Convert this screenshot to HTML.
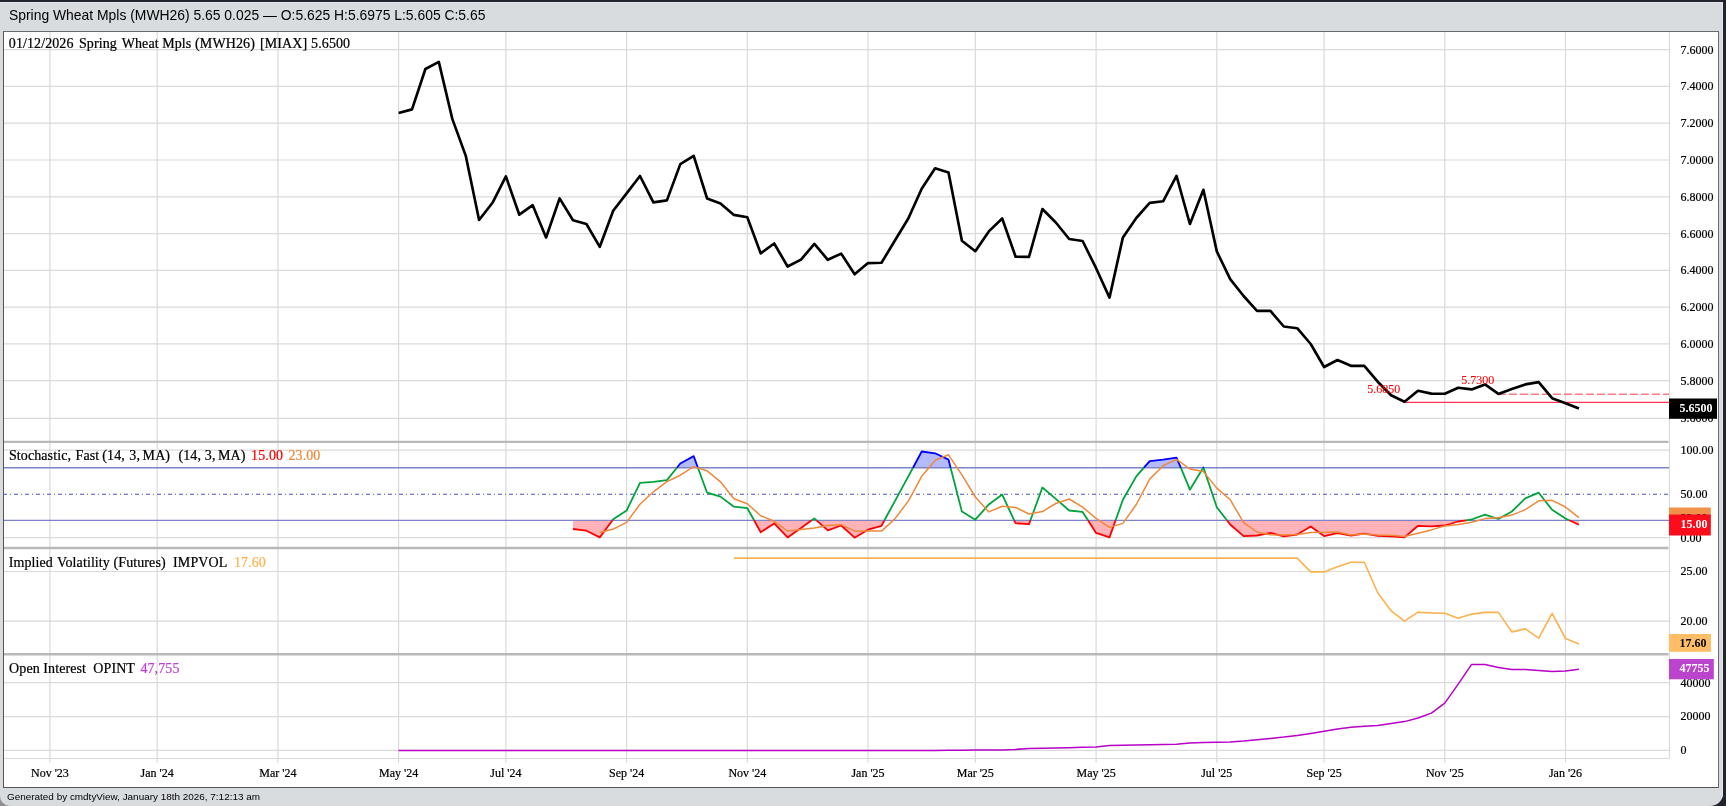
<!DOCTYPE html>
<html lang="en">
<head>
<meta charset="utf-8">
<title>Spring Wheat Mpls (MWH26)</title>
<style>
html,body{margin:0;padding:0;}
body{width:1726px;height:806px;overflow:hidden;background:#22232d;position:relative;font-family:"Liberation Sans",sans-serif;}
#win{position:absolute;left:0;top:2px;width:1723px;height:804px;background:#d9dcdf;border-radius:0 0 13px 10px;overflow:hidden;box-shadow:inset -1px 1px 0 #e6e9ec;}
#hdr{position:absolute;left:9px;top:5px;font-size:13.9px;line-height:16px;color:#000;white-space:pre;}
#chart{position:absolute;left:3px;top:29px;width:1714px;height:755px;background:#fff;border:1px solid #6a6a6a;border-left-color:#555;border-bottom-color:#555;}
#ftr{position:absolute;top:789px;left:7px;font-size:9.93px;line-height:12px;color:#000;white-space:pre;}
svg{position:absolute;left:0;top:0;will-change:transform;}
#hdr,#ftr{will-change:transform;}
</style>
</head>
<body>
<div style="position:absolute;left:0;top:790px;width:14px;height:16px;background:#8e8e90"></div>
<div id="win">
<div id="hdr">Spring Wheat Mpls (MWH26) 5.65 0.025 — O:5.625 H:5.6975 L:5.605 C:5.65</div>
<div id="chart"></div>
<div id="ftr">Generated by cmdtyView, January 18th 2026, 7:12:13 am</div>
</div>
<svg width="1726" height="806" viewBox="0 0 1726 806">
<g stroke="#dadada" stroke-width="1.2" fill="none">
<line x1="49.9" y1="32" x2="49.9" y2="762.5"/>
<line x1="157.2" y1="32" x2="157.2" y2="762.5"/>
<line x1="277.9" y1="32" x2="277.9" y2="762.5"/>
<line x1="398.6" y1="32" x2="398.6" y2="762.5"/>
<line x1="505.9" y1="32" x2="505.9" y2="762.5"/>
<line x1="626.6" y1="32" x2="626.6" y2="762.5"/>
<line x1="747.3" y1="32" x2="747.3" y2="762.5"/>
<line x1="868.0" y1="32" x2="868.0" y2="762.5"/>
<line x1="975.3" y1="32" x2="975.3" y2="762.5"/>
<line x1="1096.1" y1="32" x2="1096.1" y2="762.5"/>
<line x1="1216.8" y1="32" x2="1216.8" y2="762.5"/>
<line x1="1324.1" y1="32" x2="1324.1" y2="762.5"/>
<line x1="1444.8" y1="32" x2="1444.8" y2="762.5"/>
<line x1="1565.5" y1="32" x2="1565.5" y2="762.5"/>
<line x1="4" y1="49.6" x2="1669" y2="49.6"/>
<line x1="4" y1="86.4" x2="1669" y2="86.4"/>
<line x1="4" y1="123.2" x2="1669" y2="123.2"/>
<line x1="4" y1="160.0" x2="1669" y2="160.0"/>
<line x1="4" y1="196.8" x2="1669" y2="196.8"/>
<line x1="4" y1="233.6" x2="1669" y2="233.6"/>
<line x1="4" y1="270.3" x2="1669" y2="270.3"/>
<line x1="4" y1="307.1" x2="1669" y2="307.1"/>
<line x1="4" y1="343.9" x2="1669" y2="343.9"/>
<line x1="4" y1="380.7" x2="1669" y2="380.7"/>
<line x1="4" y1="418.3" x2="1669" y2="418.3"/>
<line x1="4" y1="450.2" x2="1669" y2="450.2"/>
<line x1="4" y1="537.7" x2="1669" y2="537.7"/>
<line x1="4" y1="571.5" x2="1669" y2="571.5"/>
<line x1="4" y1="621.1" x2="1669" y2="621.1"/>
<line x1="4" y1="682.7" x2="1669" y2="682.7"/>
<line x1="4" y1="716.6" x2="1669" y2="716.6"/>
<line x1="4" y1="750.4" x2="1669" y2="750.4"/>
<line x1="4" y1="758.5" x2="1669" y2="758.5"/>
<line x1="1669.5" y1="32" x2="1669.5" y2="758.5"/>
</g>
<path d="M573.0,520.3 L573.0,529.0 L586.4,530.7 L599.8,537.4 L612.5,520.3 L612.5,520.3 Z" fill="#ffb3b8" stroke="none"/>
<path d="M754.1,520.3 L754.1,520.3 L760.7,532.2 L774.2,523.4 L787.6,537.4 L801.0,528.0 L811.7,520.3 L811.7,520.3 Z" fill="#ffb3b8" stroke="none"/>
<path d="M816.5,520.3 L816.5,520.3 L827.8,530.3 L841.2,525.5 L854.6,537.7 L868.0,529.7 L881.5,525.8 L884.4,520.3 L884.4,520.3 Z" fill="#ffb3b8" stroke="none"/>
<path d="M1014.2,520.3 L1014.2,520.3 L1015.6,523.2 L1029.0,524.1 L1030.4,520.3 L1030.4,520.3 Z" fill="#ffb3b8" stroke="none"/>
<path d="M1088.0,520.3 L1088.0,520.3 L1096.1,532.9 L1109.5,537.4 L1115.6,520.3 L1115.6,520.3 Z" fill="#ffb3b8" stroke="none"/>
<path d="M1226.9,520.3 L1226.9,520.3 L1230.2,524.5 L1243.6,536.1 L1257.0,535.5 L1270.4,532.9 L1283.8,536.4 L1297.2,534.5 L1310.7,526.4 L1324.1,536.1 L1337.5,533.2 L1350.9,535.5 L1364.3,533.6 L1377.7,535.8 L1391.1,536.4 L1404.5,537.4 L1418.0,525.8 L1431.4,526.4 L1444.8,525.5 L1458.2,521.5 L1466.2,520.3 L1466.2,520.3 Z" fill="#ffb3b8" stroke="none"/>
<path d="M1569.2,520.3 L1569.2,520.3 L1578.9,524.7 L1578.9,520.3 Z" fill="#ffb3b8" stroke="none"/>
<path d="M676.9,467.7 L676.9,467.7 L680.3,463.5 L693.7,456.1 L697.9,467.7 L697.9,467.7 Z" fill="#b3bbfa" stroke="none"/>
<path d="M913.0,467.7 L913.0,467.7 L921.7,451.5 L935.1,453.3 L948.5,459.6 L950.6,467.7 L950.6,467.7 Z" fill="#b3bbfa" stroke="none"/>
<path d="M1143.9,467.7 L1143.9,467.7 L1149.7,461.1 L1163.1,459.6 L1176.5,457.6 L1180.8,467.7 L1180.8,467.7 Z" fill="#b3bbfa" stroke="none"/>
<path d="M1203.2,467.7 L1203.2,467.7 L1203.4,467.4 L1203.5,467.7 L1203.5,467.7 Z" fill="#b3bbfa" stroke="none"/>
<g stroke="#7d84c9" stroke-width="1.35" fill="none">
<line x1="4" y1="467.7" x2="1669" y2="467.7"/>
<line x1="4" y1="520.3" x2="1669" y2="520.3"/>
<line x1="3" y1="494.3" x2="1669" y2="494.3" stroke="#4652bd" stroke-width="1.1" stroke-dasharray="4 3 1 3"/>
</g>
<path d="M612.5,520.3 L613.2,519.3 L626.6,510.6 L640.0,482.9 L653.4,481.9 L666.9,480.1 L676.9,467.7" fill="none" stroke="#00a33c" stroke-width="1.8" stroke-linejoin="round"/>
<path d="M697.9,467.7 L707.1,492.7 L720.5,496.6 L733.9,506.7 L747.3,508.2 L754.1,520.3" fill="none" stroke="#00a33c" stroke-width="1.8" stroke-linejoin="round"/>
<path d="M811.7,520.3 L814.4,518.4 L816.5,520.3" fill="none" stroke="#00a33c" stroke-width="1.8" stroke-linejoin="round"/>
<path d="M884.4,520.3 L894.9,501.1 L908.3,476.4 L913.0,467.7" fill="none" stroke="#00a33c" stroke-width="1.8" stroke-linejoin="round"/>
<path d="M950.6,467.7 L961.9,511.6 L975.3,519.7 L988.8,504.4 L1002.2,494.6 L1014.2,520.3" fill="none" stroke="#00a33c" stroke-width="1.8" stroke-linejoin="round"/>
<path d="M1030.4,520.3 L1042.4,487.5 L1055.8,498.9 L1069.2,510.5 L1082.6,511.9 L1088.0,520.3" fill="none" stroke="#00a33c" stroke-width="1.8" stroke-linejoin="round"/>
<path d="M1115.6,520.3 L1122.9,499.8 L1136.3,476.4 L1143.9,467.7" fill="none" stroke="#00a33c" stroke-width="1.8" stroke-linejoin="round"/>
<path d="M1180.8,467.7 L1189.9,489.7 L1203.2,467.7" fill="none" stroke="#00a33c" stroke-width="1.8" stroke-linejoin="round"/>
<path d="M1203.5,467.7 L1216.8,507.2 L1226.9,520.3" fill="none" stroke="#00a33c" stroke-width="1.8" stroke-linejoin="round"/>
<path d="M1466.2,520.3 L1471.6,519.5 L1485.0,514.7 L1498.4,519.0 L1511.8,511.5 L1525.3,498.3 L1538.7,492.7 L1552.1,509.8 L1565.5,518.6 L1569.2,520.3" fill="none" stroke="#00a33c" stroke-width="1.8" stroke-linejoin="round"/>
<path d="M676.9,467.7 L680.3,463.5 L693.7,456.1 L697.9,467.7" fill="none" stroke="#0000ff" stroke-width="1.8" stroke-linejoin="round"/>
<path d="M913.0,467.7 L921.7,451.5 L935.1,453.3 L948.5,459.6 L950.6,467.7" fill="none" stroke="#0000ff" stroke-width="1.8" stroke-linejoin="round"/>
<path d="M1143.9,467.7 L1149.7,461.1 L1163.1,459.6 L1176.5,457.6 L1180.8,467.7" fill="none" stroke="#0000ff" stroke-width="1.8" stroke-linejoin="round"/>
<path d="M1203.2,467.7 L1203.4,467.4 L1203.5,467.7" fill="none" stroke="#0000ff" stroke-width="1.8" stroke-linejoin="round"/>
<path d="M573.0,529.0 L586.4,530.7 L599.8,537.4 L612.5,520.3" fill="none" stroke="#ff0000" stroke-width="1.8" stroke-linejoin="round"/>
<path d="M754.1,520.3 L760.7,532.2 L774.2,523.4 L787.6,537.4 L801.0,528.0 L811.7,520.3" fill="none" stroke="#ff0000" stroke-width="1.8" stroke-linejoin="round"/>
<path d="M816.5,520.3 L827.8,530.3 L841.2,525.5 L854.6,537.7 L868.0,529.7 L881.5,525.8 L884.4,520.3" fill="none" stroke="#ff0000" stroke-width="1.8" stroke-linejoin="round"/>
<path d="M1014.2,520.3 L1015.6,523.2 L1029.0,524.1 L1030.4,520.3" fill="none" stroke="#ff0000" stroke-width="1.8" stroke-linejoin="round"/>
<path d="M1088.0,520.3 L1096.1,532.9 L1109.5,537.4 L1115.6,520.3" fill="none" stroke="#ff0000" stroke-width="1.8" stroke-linejoin="round"/>
<path d="M1226.9,520.3 L1230.2,524.5 L1243.6,536.1 L1257.0,535.5 L1270.4,532.9 L1283.8,536.4 L1297.2,534.5 L1310.7,526.4 L1324.1,536.1 L1337.5,533.2 L1350.9,535.5 L1364.3,533.6 L1377.7,535.8 L1391.1,536.4 L1404.5,537.4 L1418.0,525.8 L1431.4,526.4 L1444.8,525.5 L1458.2,521.5 L1466.2,520.3" fill="none" stroke="#ff0000" stroke-width="1.8" stroke-linejoin="round"/>
<path d="M1569.2,520.3 L1578.9,524.7" fill="none" stroke="#ff0000" stroke-width="1.8" stroke-linejoin="round"/>
<polyline points="599.8,532.4 613.2,529.1 626.6,522.4 640.0,504.3 653.4,491.8 666.9,481.6 680.3,475.2 693.7,466.6 707.1,470.8 720.5,481.8 733.9,498.7 747.3,503.8 760.7,515.7 774.2,521.3 787.6,531.0 801.0,529.6 814.4,527.9 827.8,525.6 841.2,524.7 854.6,531.2 868.0,531.0 881.5,531.1 894.9,518.9 908.3,501.1 921.7,476.3 935.1,460.4 948.5,454.8 961.9,474.8 975.3,497.0 988.8,511.9 1002.2,506.2 1015.6,507.4 1029.0,514.0 1042.4,511.6 1055.8,503.5 1069.2,499.0 1082.6,507.1 1096.1,518.4 1109.5,527.4 1122.9,523.4 1136.3,504.5 1149.7,479.1 1163.1,465.7 1176.5,459.4 1189.9,469.0 1203.4,471.6 1216.8,488.1 1230.2,499.7 1243.6,522.6 1257.0,532.0 1270.4,534.8 1283.8,534.9 1297.2,534.6 1310.7,532.4 1324.1,532.3 1337.5,531.9 1350.9,534.9 1364.3,534.1 1377.7,535.0 1391.1,535.3 1404.5,536.5 1418.0,533.2 1431.4,529.9 1444.8,525.9 1458.2,524.5 1471.6,522.2 1485.0,518.6 1498.4,517.7 1511.8,515.1 1525.3,509.6 1538.7,500.8 1552.1,500.3 1565.5,507.0 1578.9,517.7" fill="none" stroke="#f0883a" stroke-width="1.5" stroke-linejoin="round"/>
<polyline points="733.9,558.1 747.3,558.1 760.7,558.1 774.2,558.1 787.6,558.1 801.0,558.1 814.4,558.1 827.8,558.1 841.2,558.1 854.6,558.1 868.0,558.1 881.5,558.1 894.9,558.1 908.3,558.1 921.7,558.1 935.1,558.1 948.5,558.1 961.9,558.1 975.3,558.1 988.8,558.1 1002.2,558.1 1015.6,558.1 1029.0,558.1 1042.4,558.1 1055.8,558.1 1069.2,558.1 1082.6,558.1 1096.1,558.1 1109.5,558.1 1122.9,558.1 1136.3,558.1 1149.7,558.1 1163.1,558.1 1176.5,558.1 1189.9,558.1 1203.4,558.1 1216.8,558.1 1230.2,558.1 1243.6,558.1 1257.0,558.1 1270.4,558.1 1283.8,558.1 1297.2,558.1 1310.7,571.9 1324.1,571.9 1337.5,566.8 1350.9,562.2 1364.3,562.2 1377.7,592.7 1391.1,610.8 1404.5,621.2 1418.0,612.2 1431.4,612.9 1444.8,613.2 1458.2,618.3 1471.6,614.1 1485.0,612.4 1498.4,612.4 1511.8,631.9 1525.3,628.9 1538.7,638.1 1552.1,613.3 1565.5,638.5 1578.9,644.0" fill="none" stroke="#ffb14d" stroke-width="1.6" stroke-linejoin="round"/>
<polyline points="398.6,750.4 412.0,750.4 425.4,750.4 438.8,750.4 452.3,750.4 465.7,750.4 479.1,750.4 492.5,750.4 505.9,750.4 519.3,750.4 532.7,750.4 546.1,750.4 559.6,750.4 573.0,750.4 586.4,750.4 599.8,750.4 613.2,750.4 626.6,750.4 640.0,750.4 653.4,750.4 666.9,750.4 680.3,750.4 693.7,750.4 707.1,750.4 720.5,750.4 733.9,750.4 747.3,750.4 760.7,750.4 774.2,750.4 787.6,750.4 801.0,750.4 814.4,750.4 827.8,750.4 841.2,750.4 854.6,750.4 868.0,750.4 881.5,750.4 894.9,750.4 908.3,750.4 921.7,750.4 935.1,750.4 948.5,750.3 961.9,750.2 975.3,750.1 988.8,750.0 1002.2,749.9 1015.6,749.4 1029.0,748.6 1042.4,748.2 1055.8,748.0 1069.2,747.7 1082.6,747.3 1096.1,746.9 1109.5,745.6 1122.9,745.3 1136.3,745.0 1149.7,744.7 1163.1,744.5 1176.5,744.2 1189.9,742.9 1203.4,742.5 1216.8,742.2 1230.2,742.0 1243.6,741.0 1257.0,739.7 1270.4,738.4 1283.8,737.1 1297.2,735.4 1310.7,733.4 1324.1,731.2 1337.5,729.0 1350.9,727.3 1364.3,726.3 1377.7,725.4 1391.1,723.6 1404.5,721.6 1418.0,718.0 1431.4,713.1 1444.8,703.1 1458.2,684.1 1471.6,664.4 1485.0,664.4 1498.4,667.5 1511.8,669.6 1525.3,669.6 1538.7,670.6 1552.1,671.5 1565.5,670.9 1578.9,669.3" fill="none" stroke="#b800c8" stroke-width="1.5" stroke-linejoin="round"/>
<line x1="1497.9" y1="394.2" x2="1669" y2="394.2" stroke="#ff7a82" stroke-width="1.4" stroke-dasharray="8 3"/>
<line x1="1404.5" y1="402.3" x2="1669" y2="402.3" stroke="#ff3355" stroke-width="1.2"/>
<polyline points="398.6,113.0 412.0,109.4 425.4,69.0 438.8,61.9 452.3,118.9 465.7,155.6 479.1,220.0 492.5,202.8 505.9,176.4 519.3,214.7 532.7,205.2 546.1,237.5 559.6,198.4 573.0,220.2 586.4,224.0 599.8,246.8 613.2,210.8 626.6,193.4 640.0,176.0 653.4,202.4 666.9,200.4 680.3,164.1 693.7,155.8 707.1,198.5 720.5,203.4 733.9,214.9 747.3,217.3 760.7,253.4 774.2,243.5 787.6,266.5 801.0,259.6 814.4,243.9 827.8,259.8 841.2,253.6 854.6,274.3 868.0,263.1 881.5,262.8 894.9,240.5 908.3,218.5 921.7,188.7 935.1,168.3 948.5,172.4 961.9,240.7 975.3,251.2 988.8,231.4 1002.2,218.5 1015.6,256.7 1029.0,256.9 1042.4,209.0 1055.8,222.5 1069.2,239.0 1082.6,241.0 1096.1,268.2 1109.5,297.6 1122.9,237.4 1136.3,218.0 1149.7,202.9 1163.1,201.3 1176.5,175.9 1189.9,224.0 1203.4,189.8 1216.8,251.4 1230.2,279.2 1243.6,296.0 1257.0,310.9 1270.4,310.9 1283.8,326.5 1297.2,328.2 1310.7,344.0 1324.1,367.0 1337.5,360.0 1350.9,365.8 1364.3,365.8 1377.7,381.7 1391.1,395.2 1404.5,401.7 1418.0,390.8 1431.4,393.6 1444.8,393.8 1458.2,387.8 1471.6,389.4 1485.0,384.4 1498.4,393.9 1511.8,389.1 1525.3,384.4 1538.7,382.1 1552.1,398.2 1565.5,403.2 1578.9,408.5" fill="none" stroke="#000" stroke-width="2.65" stroke-linejoin="round"/>
<g stroke="#b9b9b9" stroke-width="2.4">
<line x1="4" y1="441.9" x2="1668.5" y2="441.9"/>
<line x1="4" y1="548.0" x2="1668.5" y2="548.0"/>
<line x1="4" y1="654.2" x2="1668.5" y2="654.2"/>
</g>
<g font-family="'Liberation Serif', serif" font-size="12px" fill="#000" stroke="#000" stroke-width="0.22">
<text x="1680.5" y="53.5">7.6000</text>
<text x="1680.5" y="90.3">7.4000</text>
<text x="1680.5" y="127.1">7.2000</text>
<text x="1680.5" y="163.9">7.0000</text>
<text x="1680.5" y="200.7">6.8000</text>
<text x="1680.5" y="237.5">6.6000</text>
<text x="1680.5" y="274.2">6.4000</text>
<text x="1680.5" y="311.0">6.2000</text>
<text x="1680.5" y="347.8">6.0000</text>
<text x="1680.5" y="384.6">5.8000</text>
<text x="1680.5" y="422.2">5.6000</text>
<text x="1680.5" y="454.0">100.00</text>
<text x="1680.5" y="497.8">50.00</text>
<text x="1680.5" y="541.5">0.00</text>
<text x="1680.5" y="575.3">25.00</text>
<text x="1680.5" y="624.9">20.00</text>
<text x="1680.5" y="686.5">40000</text>
<text x="1680.5" y="720.4">20000</text>
<text x="1680.5" y="754.2">0</text>
<text x="49.9" y="776.8" text-anchor="middle">Nov '23</text>
<text x="157.2" y="776.8" text-anchor="middle">Jan '24</text>
<text x="277.9" y="776.8" text-anchor="middle">Mar '24</text>
<text x="398.6" y="776.8" text-anchor="middle">May '24</text>
<text x="505.9" y="776.8" text-anchor="middle">Jul '24</text>
<text x="626.6" y="776.8" text-anchor="middle">Sep '24</text>
<text x="747.3" y="776.8" text-anchor="middle">Nov '24</text>
<text x="868.0" y="776.8" text-anchor="middle">Jan '25</text>
<text x="975.3" y="776.8" text-anchor="middle">Mar '25</text>
<text x="1096.1" y="776.8" text-anchor="middle">May '25</text>
<text x="1216.8" y="776.8" text-anchor="middle">Jul '25</text>
<text x="1324.1" y="776.8" text-anchor="middle">Sep '25</text>
<text x="1444.8" y="776.8" text-anchor="middle">Nov '25</text>
<text x="1565.5" y="776.8" text-anchor="middle">Jan '26</text>
</g>
<g font-family="'Liberation Serif', serif" font-size="12px" fill="#ff0000" stroke="#ff0000" stroke-width="0.08">
<text x="1367.2" y="393.0">5.6850</text>
<text x="1461.3" y="384.0">5.7300</text>
</g>
<rect x="1669" y="398.5" width="48" height="20.3" fill="#000"/>
<text x="1679.6" y="411.7" font-family="'Liberation Serif', serif" font-size="12px" font-weight="bold" fill="#fff">5.6500</text>
<rect x="1669" y="507.5" width="41.8" height="20.5" fill="#f0924a"/>
<text x="1680.5" y="521.5" font-family="'Liberation Serif', serif" font-size="12px" font-weight="bold" fill="#000">23.00</text>
<rect x="1669" y="514.5" width="41.8" height="21" fill="#fb0d1b"/>
<text x="1680.5" y="527.6" font-family="'Liberation Serif', serif" font-size="12px" font-weight="bold" fill="#fff">15.00</text>
<rect x="1669" y="634.0" width="42" height="17.8" fill="#ffbd66"/>
<text x="1679.6" y="647.1" font-family="'Liberation Serif', serif" font-size="12px" font-weight="bold" fill="#000">17.60</text>
<rect x="1669" y="659" width="44.8" height="20.3" fill="#bb44cc"/>
<text x="1679.6" y="672.0" font-family="'Liberation Serif', serif" font-size="12px" font-weight="bold" fill="#fff">47755</text>
<g font-family="'Liberation Serif', serif" font-size="14px" fill="#000" stroke="#000" stroke-width="0.22" letter-spacing="0.1">
<text y="47.8"><tspan x="8.79">01/12/2026</tspan> <tspan x="78.99">Spring</tspan> <tspan x="121.68">Wheat</tspan> <tspan x="162.16">Mpls</tspan> <tspan x="195.10">(MWH26)</tspan> <tspan x="260.04">[MIAX]</tspan> <tspan x="311.10">5.6500</tspan></text>
<text y="459.8"><tspan x="8.92">Stochastic,</tspan> <tspan x="75.60">Fast</tspan> <tspan x="102.30">(14,</tspan> <tspan x="129.30">3,</tspan> <tspan x="142.60">MA)</tspan> <tspan x="178.44">(14,</tspan> <tspan x="204.80">3,</tspan> <tspan x="217.95">MA)</tspan> <tspan x="251.11" fill="#ff0000" stroke="#ff0000">15.00</tspan> <tspan x="288.45" fill="#f0883a" stroke="#f0883a">23.00</tspan></text>
<text y="566.5"><tspan x="8.70">Implied</tspan> <tspan x="57.10">Volatility</tspan> <tspan x="113.50">(Futures)</tspan> <tspan x="173.10">IMPVOL</tspan> <tspan x="233.90" fill="#ffb14d" stroke="#ffb14d">17.60</tspan></text>
<text y="672.6"><tspan x="9.10">Open</tspan> <tspan x="43.32">Interest</tspan> <tspan x="93.30">OPINT</tspan> <tspan x="140.43" fill="#bf3fd9" stroke="#bf3fd9">47,755</tspan></text>
</g>
</svg>
</body>
</html>
